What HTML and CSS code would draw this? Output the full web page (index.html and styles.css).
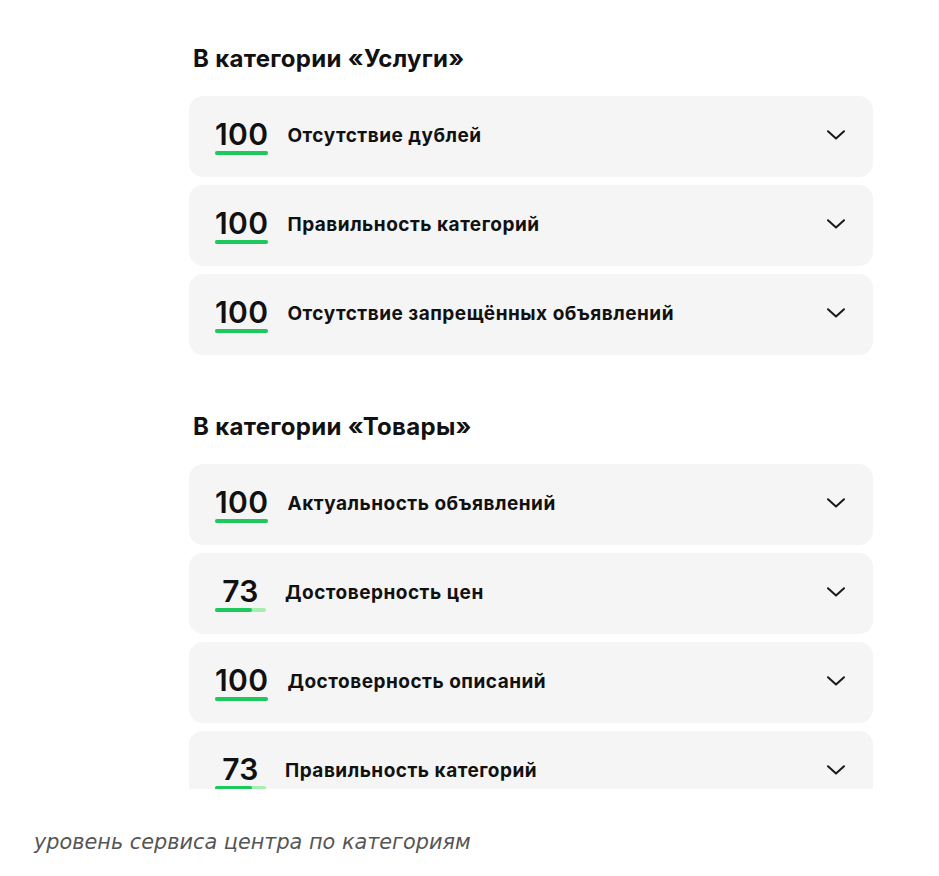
FILE: index.html
```html
<!DOCTYPE html>
<html lang="ru">
<head>
    <meta charset="UTF-8">
    <title>Уровень сервиса</title>
    <link rel="stylesheet" href="styles.css">
</head>
<body>
    <div class="frame">
        <div class="content">
            <h2 class="cat-title">В категории «Услуги»</h2>
            <div class="rows">
                <div class="row">
                    <div class="score"><span class="num">100</span><span class="bar"><span class="fill" style="width:100%"></span></span></div>
                    <span class="label">Отсутствие дублей</span>
                    <svg class="chev" width="18" height="10" viewBox="0 0 18 10"><path d="M1 1.2 L9 8.6 L17 1.2" /></svg>
                </div>
                <div class="row">
                    <div class="score"><span class="num">100</span><span class="bar"><span class="fill" style="width:100%"></span></span></div>
                    <span class="label">Правильность категорий</span>
                    <svg class="chev" width="18" height="10" viewBox="0 0 18 10"><path d="M1 1.2 L9 8.6 L17 1.2" /></svg>
                </div>
                <div class="row">
                    <div class="score"><span class="num">100</span><span class="bar"><span class="fill" style="width:100%"></span></span></div>
                    <span class="label">Отсутствие запрещённых объявлений</span>
                    <svg class="chev" width="18" height="10" viewBox="0 0 18 10"><path d="M1 1.2 L9 8.6 L17 1.2" /></svg>
                </div>
            </div>

            <h2 class="cat-title second">В категории «Товары»</h2>
            <div class="rows">
                <div class="row">
                    <div class="score"><span class="num">100</span><span class="bar"><span class="fill" style="width:100%"></span></span></div>
                    <span class="label">Актуальность объявлений</span>
                    <svg class="chev" width="18" height="10" viewBox="0 0 18 10"><path d="M1 1.2 L9 8.6 L17 1.2" /></svg>
                </div>
                <div class="row">
                    <div class="score"><span class="num">73</span><span class="bar"><span class="fill" style="width:73%"></span></span></div>
                    <span class="label">Достоверность цен</span>
                    <svg class="chev" width="18" height="10" viewBox="0 0 18 10"><path d="M1 1.2 L9 8.6 L17 1.2" /></svg>
                </div>
                <div class="row">
                    <div class="score"><span class="num">100</span><span class="bar"><span class="fill" style="width:100%"></span></span></div>
                    <span class="label">Достоверность описаний</span>
                    <svg class="chev" width="18" height="10" viewBox="0 0 18 10"><path d="M1 1.2 L9 8.6 L17 1.2" /></svg>
                </div>
                <div class="row">
                    <div class="score"><span class="num">73</span><span class="bar"><span class="fill" style="width:73%"></span></span></div>
                    <span class="label">Правильность категорий</span>
                    <svg class="chev" width="18" height="10" viewBox="0 0 18 10"><path d="M1 1.2 L9 8.6 L17 1.2" /></svg>
                </div>
            </div>
        </div>
    </div>
    <p class="caption">уровень сервиса центра по категориям</p>
</body>
</html>
```

FILE: styles.css
```css
body {margin: 0; background: #fff; font-family: Inter, "Noto Sans", sans-serif; color: #111;}
.frame {height: 789px; overflow: hidden;}
.content {width: 684px; margin-left: 189px; padding-top: 44px;}
.cat-title {margin: 0 0 22px 4px; font-size: 24px; font-weight: 700; line-height: 30px; letter-spacing: 0.3px;}
.cat-title.second {margin-top: 57px;}
.rows {display: flex; flex-direction: column; gap: 8px;}
.row {display: flex; align-items: center; height: 81px; padding: 0 28px 0 26px; background: #f5f5f5; border-radius: 14px; box-sizing: border-box;}
.score {display: flex; flex-direction: column; align-items: center; min-width: 51px; margin-right: 19px;}
.num {font-size: 30px; font-weight: 600; line-height: 30px; letter-spacing: 0.4px;}
.bar {display: block; width: 100%; height: 4px; margin-top: 2px; border-radius: 2px; background: #a6eeb0;}
.fill {display: block; height: 100%; border-radius: 2px; background: #1ec95c;}
.label {flex: 1; font-size: 19px; font-weight: 700; letter-spacing: 0.5px; line-height: 24px; margin-bottom: 1px;}
.chev {margin-bottom: 4px; fill: none; stroke: #1a1a1a; stroke-width: 2; stroke-linecap: round; stroke-linejoin: round;}
.caption {margin: 41px 0 0 34px; font-family: "DejaVu Sans", sans-serif; font-style: italic; font-size: 20.8px; color: #555;}
```
